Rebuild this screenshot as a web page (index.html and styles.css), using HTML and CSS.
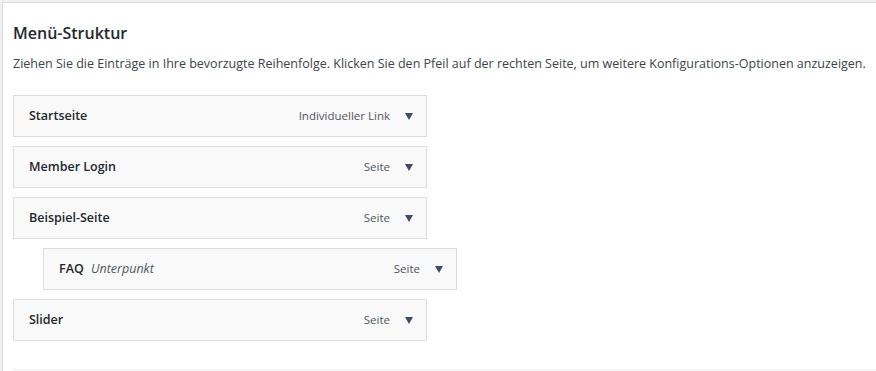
FILE: index.html
```html
<!DOCTYPE html>
<html lang="de">
<head>
    <meta charset="UTF-8">
    <meta name="viewport" content="width=device-width, initial-scale=1.0">
    <title>Menü-Struktur</title>
    <link rel="stylesheet" href="styles.css">
</head>
<body>
    <div class="menu-panel">
        <h3 class="panel-title">Menü-Struktur</h3>
        <p class="panel-desc">Ziehen Sie die Einträge in Ihre bevorzugte Reihenfolge. Klicken Sie den Pfeil auf der rechten Seite, um weitere Konfigurations-Optionen anzuzeigen.</p>
        <ul class="menu-list">
            <li class="menu-item">
                <span class="item-title">Startseite</span>
                <span class="item-type">Individueller Link</span>
                <span class="item-arrow"></span>
            </li>
            <li class="menu-item">
                <span class="item-title">Member Login</span>
                <span class="item-type">Seite</span>
                <span class="item-arrow"></span>
            </li>
            <li class="menu-item">
                <span class="item-title">Beispiel-Seite</span>
                <span class="item-type">Seite</span>
                <span class="item-arrow"></span>
            </li>
            <li class="menu-item depth-1">
                <span class="item-title">FAQ <em class="sub-label">Unterpunkt</em></span>
                <span class="item-type">Seite</span>
                <span class="item-arrow"></span>
            </li>
            <li class="menu-item">
                <span class="item-title">Slider</span>
                <span class="item-type">Seite</span>
                <span class="item-arrow"></span>
            </li>
        </ul>
        <div class="panel-footer"></div>
    </div>
</body>
</html>
```

FILE: styles.css
```css
body {
    margin: 0;
    padding: 2px 0 0 2px;
    background: #f1f1f1;
    font-family: "Open Sans", "Noto Sans", sans-serif;
    color: #32373c;
    overflow: hidden;
}
.menu-panel {
    background: #fff;
    border-left: 1px solid #dcdcdc;
    border-top: 1px solid #dcdcdc;
    padding: 0 0 0 10px;
    height: calc(100vh - 3px);
    overflow: hidden;
}
.panel-title {
    margin: 0;
    padding-top: 19px;
    font-size: 16px;
    font-weight: 600;
    line-height: 22px;
    color: #23282d;
}
.panel-desc {
    margin: 10px 0 0;
    font-size: 12.5px;
    line-height: 20px;
    color: #3c434a;
    white-space: nowrap;
}
.menu-list { list-style: none; margin: 21px 0 0; padding: 0; }
.menu-item {
    display: flex;
    align-items: center;
    width: 382px;
    padding: 10px 15px;
    line-height: 20px;
    margin-bottom: 9px;
    background: #f9f9f9;
    border: 1px solid #dcdcdc;
    font-size: 12.5px;
}
.menu-item.depth-1 { margin-left: 30px; }
.item-title { flex: 1; font-weight: 600; color: #23282d; }
.sub-label { font-style: italic; font-weight: 400; color: #50575e; margin-left: 4px; }
.item-type { font-size: 11.5px; color: #50575e; }
.item-arrow {
    width: 0; height: 0;
    margin: 0 -2px 0 15px;
    border-left: 4px solid transparent;
    border-right: 4px solid transparent;
    border-top: 7px solid #3f4b69;
}
.panel-footer {
    margin-top: 28px;
    border-top: 1px solid #eee;
}
```
